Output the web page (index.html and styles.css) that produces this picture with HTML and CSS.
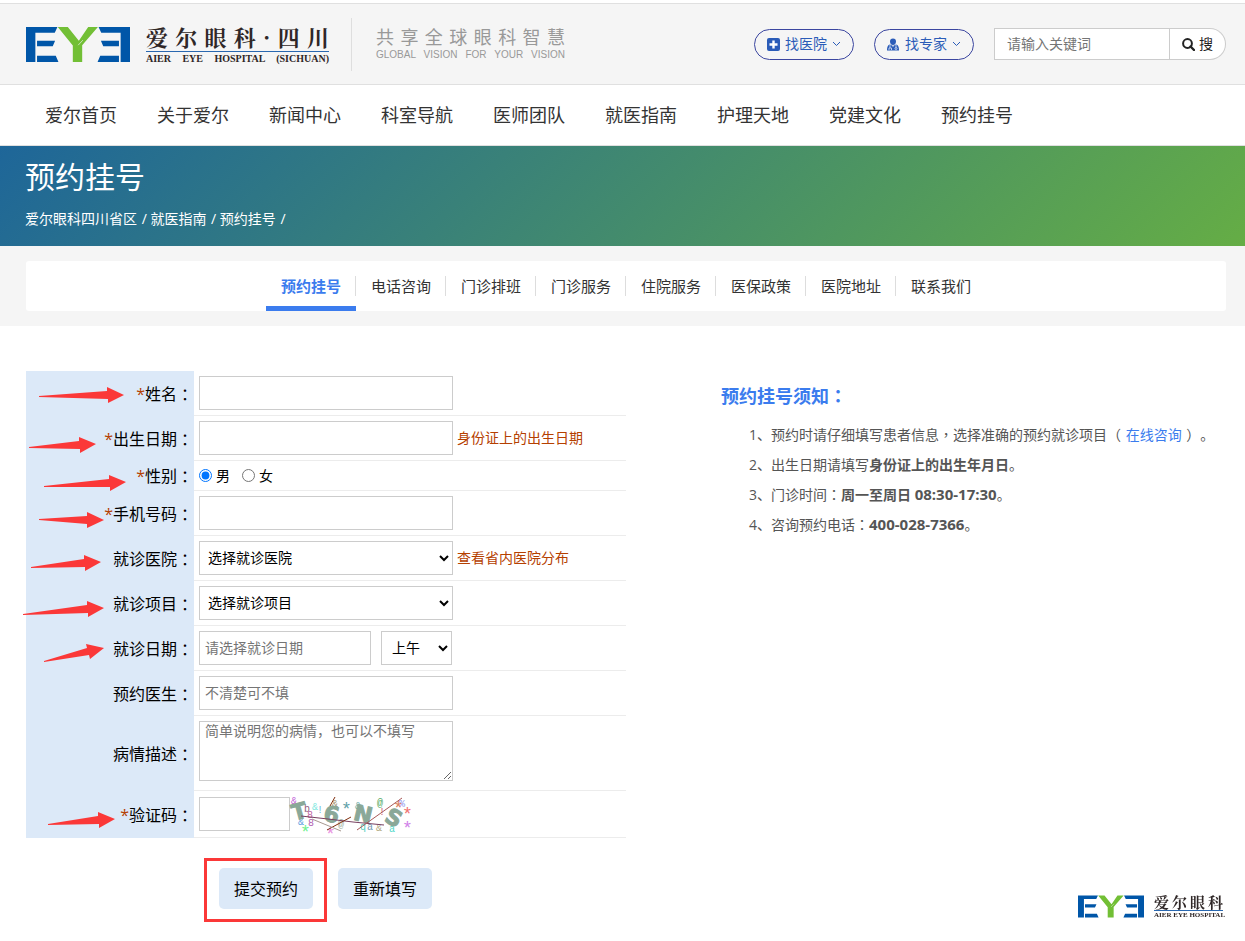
FILE: index.html
```html
<!DOCTYPE html>
<html lang="zh-CN">
<head>
<meta charset="utf-8">
<meta name="viewport" content="width=device-width, initial-scale=1">
<title>预约挂号</title>
<link rel="stylesheet" href="styles.css">
</head>
<body>
<svg width="0" height="0" class="defs" aria-hidden="true">
  <symbol id="eye" viewBox="78 79 311 104">
    <path fill="#0056a8" d="M78 79H172L164 96H106V183H78ZM111 120H165L158 136H111ZM111 165H167L175 183H111ZM389 79H295L303 96H361V183H389ZM356 120H302L309 136H356ZM356 165H300L292 183H356Z"/>
    <path fill="#72bf35" d="M173 79H203L236 120L264 79H293L246 133V183H218V134Z"/>
    <path stroke="#f5f5f5" stroke-width="2" d="M234 133L248 118"/>
  </symbol>
</svg>

<header class="topbar">
  <a class="brand" href="#" aria-label="爱尔眼科四川">
    <svg class="brand-eye"><use href="#eye"/></svg>
    <span class="brand-name"><span class="brand-cn">爱尔眼科·四川</span><span class="brand-en">AIER EYE HOSPITAL (SICHUAN)</span></span>
  </a>
  <div class="slogan"><span class="slogan-cn">共享全球眼科智慧</span><span class="slogan-en">GLOBAL VISION FOR YOUR VISION</span></div>
  <div class="tools">
    <button class="pill" type="button">
      <svg width="13" height="13" viewBox="0 0 13 13"><rect width="13" height="13" rx="2" fill="#2b5cb8"/><path d="M6.500 2.500V10.500M2.500 6.500H10.500" stroke="#fff" stroke-width="2.400"/></svg>
      <span>找医院</span>
      <svg class="chev" width="9" height="6" viewBox="0 0 9 6"><path d="M1 1L4.500 4.500L8 1" fill="none" stroke="#2b5cb8"/></svg>
    </button>
    <button class="pill" type="button">
      <svg width="13" height="13" viewBox="0 0 13 13"><path fill="#2b5cb8" d="M6 .5C8 .5 9 1.800 9 3.500S8 7 6 7S3 5.200 3 3.500S4 .5 6 .5ZM3 6.500L6 8L9 6.500C11 7 12 8.500 12 12.500H0C0 8.500 1 7 3 6.500Z"/><path d="M3 7V10M2 12V10H4.500V12M9 7V9.500M6 8V9" stroke="#dce6f6" stroke-width=".8" fill="none"/><circle cx="9" cy="10.500" r="1" fill="none" stroke="#dce6f6" stroke-width=".8"/></svg>
      <span>找专家</span>
      <svg class="chev" width="9" height="6" viewBox="0 0 9 6"><path d="M1 1L4.500 4.500L8 1" fill="none" stroke="#2b5cb8"/></svg>
    </button>
    <form class="search">
      <input type="text" aria-label="关键词" placeholder="请输入关键词">
      <button type="button"><svg width="13" height="13" viewBox="0 0 13 13"><circle cx="5.500" cy="5.500" r="4.400" fill="none" stroke="#222" stroke-width="2"/><path d="M8.500 8.500L12 12" stroke="#222" stroke-width="2.400" stroke-linecap="round"/></svg><span>搜</span></button>
    </form>
  </div>
</header>

<nav class="mainnav">
  <a href="#">爱尔首页</a><a href="#">关于爱尔</a><a href="#">新闻中心</a><a href="#">科室导航</a><a href="#">医师团队</a><a href="#">就医指南</a><a href="#">护理天地</a><a href="#">党建文化</a><a href="#">预约挂号</a>
</nav>

<section class="banner">
  <h1>预约挂号</h1>
  <p><a href="#">爱尔眼科四川省区</a> / <a href="#">就医指南</a> / <a href="#">预约挂号</a> /</p>
</section>

<div class="subwrap">
  <nav class="subnav">
    <a class="on" href="#">预约挂号</a><a href="#">电话咨询</a><a href="#">门诊排班</a><a href="#">门诊服务</a><a href="#">住院服务</a><a href="#">医保政策</a><a href="#">医院地址</a><a href="#">联系我们</a>
  </nav>
</div>

<main class="content">
  <form class="booking">
    <div class="row"><label class="name" for="f1"><i>*</i>姓名<span class="mid" lang="zh-TW">：</span></label><div class="cell"><input class="box" id="f1" type="text"></div></div>
    <div class="row"><label class="name" for="f2"><i>*</i>出生日期<span class="mid" lang="zh-TW">：</span></label><div class="cell"><input class="box" id="f2" type="text"><span class="hint">身份证上的出生日期</span></div></div>
    <div class="row slim"><span class="name"><i>*</i>性别<span class="mid" lang="zh-TW">：</span></span><div class="cell"><label class="opt"><input type="radio" name="sex" checked>男</label><label class="opt"><input type="radio" name="sex">女</label></div></div>
    <div class="row"><label class="name" for="f4"><i>*</i>手机号码<span class="mid" lang="zh-TW">：</span></label><div class="cell"><input class="box" id="f4" type="text"></div></div>
    <div class="row"><label class="name" for="f5">就诊医院<span class="mid" lang="zh-TW">：</span></label><div class="cell"><select class="box" id="f5"><option>选择就诊医院</option></select><a class="hint" href="#">查看省内医院分布</a></div></div>
    <div class="row"><label class="name" for="f6">就诊项目<span class="mid" lang="zh-TW">：</span></label><div class="cell"><select class="box" id="f6"><option>选择就诊项目</option></select></div></div>
    <div class="row"><label class="name" for="f7">就诊日期<span class="mid" lang="zh-TW">：</span></label><div class="cell"><input class="box date" id="f7" type="text" placeholder="请选择就诊日期"><select class="box half" aria-label="时段"><option>上午</option></select></div></div>
    <div class="row"><label class="name" for="f8">预约医生<span class="mid" lang="zh-TW">：</span></label><div class="cell"><input class="box" id="f8" type="text" placeholder="不清楚可不填"></div></div>
    <div class="row tall"><label class="name" for="f9">病情描述<span class="mid" lang="zh-TW">：</span></label><div class="cell"><textarea class="box" id="f9" placeholder="简单说明您的病情，也可以不填写"></textarea></div></div>
    <div class="row code"><label class="name" for="f10"><i>*</i>验证码<span class="mid" lang="zh-TW">：</span></label><div class="cell"><input class="box short" id="f10" type="text">
      <svg class="captcha" viewBox="0 0 121 36" role="img" aria-label="验证码图片">
        <g class="noise">
          <text x="1" y="8" fill="#c060d8">&amp;</text><text x="14" y="16" fill="#906080">b</text><text x="22" y="14" fill="#80e8e0">&amp;</text><text x="27" y="17" fill="#70b8e0">!</text><text x="8" y="29" fill="#60a0e0">&amp;</text><text x="17" y="22" fill="#c060a0">8</text><text x="18" y="30" fill="#b060b0">8</text><text x="42" y="11" fill="#a09070">&amp;</text><text x="48" y="31" fill="#a0b0a0">@</text><text x="65" y="13" fill="#70b0b0">&amp;</text><text x="87" y="10" fill="#50a860">@</text><text x="89" y="19" fill="#d06878">!</text><text x="109" y="11" fill="#9098f0">%</text><text x="70" y="34" fill="#50d0c0">q</text><text x="77" y="34" fill="#7098b0">a</text><text x="86" y="35" fill="#b0a880">&amp;</text><text x="99" y="36" fill="#50d8c8">a</text>
        </g>
        <g class="stars"><text x="51" y="19" fill="#60a0a8">*</text><text x="10" y="42" fill="#70f090">*</text><text x="112" y="24" fill="#f07070">*</text><text x="103" y="18" fill="#d88060">*</text><text x="112" y="38" fill="#d080e8">*</text><text x="35" y="44" fill="#e890e0">*</text></g>
        <g class="chars"><text transform="rotate(-15 10 16)" x="2" y="23">T</text><text transform="rotate(12 42 18)" x="34" y="26">6</text><text transform="rotate(13 74 18)" x="64" y="26">N</text><text transform="rotate(28 105 22)" x="96" y="30">S</text></g>
        <g fill="none"><path stroke="#784060" d="M11 20L38 23L63 26L94 29"/><path stroke="#803010" d="M37 34L61 21M40 10L45 1"/><path stroke="#a89890" d="M22 23L51 35"/><path stroke="#a85858" d="M67 34L112 2"/></g>
      </svg></div></div>
    <div class="actions"><span class="marked"><button type="submit">提交预约</button></span><button class="again" type="reset">重新填写</button></div>
    <svg class="arrows" viewBox="26 371 168 467" aria-hidden="true"><g fill="#fb3838">
      <path d="M39 396L107 391V387L124 395L108 403V399L39 397Z"/>
      <path d="M29 447L79 441V437L96 444L80 453V449L29 448Z"/>
      <path d="M44 486L109 479V475L126 482L110 491V487L44 487Z"/>
      <path d="M39 519L87 516V512L104 520L87 528V524L39 520Z"/>
      <path d="M31 567L84 559V555L101 562L85 571V567L31 568Z"/>
      <path d="M23 614L87 605V601L104 608L88 617V613L23 615Z"/>
      <path d="M44 661L87 648L86 644L104 648L90 659L89 655L44 662Z"/>
      <path d="M48 824L98 816V812L115 819L99 828V824L48 825Z"/>
    </g></svg>
  </form>

  <section class="notice">
    <h2>预约挂号须知<span class="mid" lang="zh-TW">：</span></h2>
    <p>1、预约时请仔细填写患者信息<span class="mid" lang="zh-TW">，</span>选择准确的预约就诊项目（ <a href="#">在线咨询</a> ）。</p>
    <p>2、出生日期请填写<b>身份证上的出生年月日</b>。</p>
    <p>3、门诊时间<span class="mid" lang="zh-TW">：</span><b>周一至周日 <span class="num">08:30-17:30</span></b>。</p>
    <p>4、咨询预约电话<span class="mid" lang="zh-TW">：</span><b class="num">400-028-7366</b>。</p>
  </section>
</main>

<div class="floatlogo">
  <svg><use href="#eye"/></svg>
  <span class="brand-name"><span class="brand-cn">爱尔眼科</span><span class="brand-en">AIER EYE HOSPITAL</span></span>
</div>
</body>
</html>
```

FILE: styles.css
```css
* { box-sizing: border-box; }
body {
  margin: 0;
  padding-top: 3px;
  background: #fff;
  color: #333;
  font: 14px/20px "Open Sans", "Noto Sans CJK SC", sans-serif;
  text-spacing-trim: space-all;
}
a { color: inherit; text-decoration: none; }
button, input, select, textarea { font: inherit; }
button { cursor: pointer; }
.defs { position: absolute; }
.mid { font-family: "Noto Sans CJK TC", sans-serif; line-height: 20px; }

/* header */
.topbar {
  display: flex;
  align-items: center;
  min-height: 82px;
  padding: 0 19px 0 26px;
  background: #f5f5f5;
  border-top: 1px solid #e0e0e0;
  border-bottom: 1px solid #e0e0e0;
}
.brand { display: flex; align-items: center; gap: 16px; }
.brand-eye { width: 104px; height: 35px; }
.brand-name { display: flex; flex-direction: column; width: 183px; color: #2f2727; text-align-last: justify; }
.brand-cn {
  padding-bottom: 2px;
  border-bottom: 1px solid #2a68b0;
  font: 700 22px/24px "Noto Serif CJK SC", "Noto Sans CJK SC", serif;
}
.brand-en { padding-top: 2px; font: bold 10px/10px "Liberation Serif", serif; white-space: nowrap; }
.slogan {
  display: flex;
  flex-direction: column;
  justify-content: center;
  width: 214px;
  height: 53px;
  margin-left: 22px;
  padding-left: 24px;
  border-left: 1px solid #dedede;
  color: #999;
  text-align-last: justify;
}
.slogan-cn { font-size: 18px; line-height: 22px; }
.slogan-en { font: 10px/14px "Liberation Sans", sans-serif; white-space: nowrap; }
.tools { display: flex; align-items: center; gap: 20px; margin-left: auto; }
.pill {
  display: flex;
  align-items: center;
  gap: 5px;
  height: 31px;
  padding: 0 12px;
  border: 1px solid #3b46a0;
  border-radius: 16px;
  background: none;
  color: #2b5cb8;
}
.search { display: flex; height: 32px; margin: 0; }
.search input {
  width: 176px;
  padding: 0 12px;
  border: 1px solid #ccc;
  border-radius: 0;
  background: #fff;
}
.search button {
  display: flex;
  align-items: center;
  gap: 4px;
  width: 56px;
  padding: 0 0 0 12px;
  border: 1px solid #ccc;
  border-left: 0;
  border-radius: 0 16px 16px 0;
  background: #fff;
  color: #222;
}
::placeholder { color: #757575; opacity: 1; }

/* main navigation */
.mainnav { display: flex; padding: 0 25px; border-bottom: 1px solid #e0e0e0; }
.mainnav a { padding: 0 20px; font-size: 18px; line-height: 60px; white-space: nowrap; }

/* banner */
.banner {
  min-height: 100px;
  padding: 11px 25px;
  background: linear-gradient(135deg, #1e6699, #65ad45);
  color: #fff;
}
.banner h1 { margin: 0; font-size: 30px; line-height: 40px; font-weight: 400; }
.banner p { margin: 12px 0 0; }
.banner p a { margin-right: 1px; }

/* section navigation */
.subwrap { padding: 15px 19px 15px 26px; background: #f5f5f5; }
.subnav { display: flex; justify-content: center; height: 50px; border-radius: 3px; background: #fff; }
.subnav a {
  display: flex;
  align-items: center;
  justify-content: center;
  width: 90px;
  border-bottom: 5px solid transparent;
  padding-top: 5px;
  font-size: 15px;
  background: linear-gradient(#ddd, #ddd) right 15px / 1px 20px no-repeat;
}
.subnav a:last-child { background: none; }
.subnav .on { border-bottom-color: #3b7cee; color: #3b7cee; font-weight: 700; }

/* booking form */
.content { display: flex; align-items: flex-start; gap: 95px; padding: 45px 19px 20px 26px; }
.booking { position: relative; flex: 0 1 600px; color: #000; }
.row { display: flex; min-height: 45px; }
.row.slim { min-height: 30px; }
.row.tall { min-height: 75px; }
.name {
  display: flex;
  flex: none;
  align-items: center;
  justify-content: flex-end;
  width: 168px;
  padding-right: 1px;
  background: #dce9f8;
  font-size: 16px;
}
.name i { color: #b54000; font-style: normal; }
.cell {
  display: flex;
  flex: 1;
  align-items: center;
  padding: 5px;
  border-bottom: 1px solid #ececec;
}
.tall .cell { align-items: flex-start; }
.box {
  width: 254px;
  height: 34px;
  padding: 0 5px 2px;
  border: 1px solid #ccc;
  border-radius: 0;
  background: #fff;
  color: #000;
}
select.box { padding: 0 0 2px 4px; }
textarea.box { height: 60px; padding: 0 5px; line-height: 18px; }
.box.date { width: 172px; }
.box.half { width: 71px; margin-left: 10px; padding-left: 6px; }
.box.short { width: 91px; }
.hint { margin-left: 4px; color: #b54000; }
.slim .cell { padding: 0 5px; }
.opt { display: flex; align-items: center; gap: 4px; margin-right: 12px; }
.opt input { width: 13px; height: 13px; margin: 0; }
.captcha { width: 121px; height: 36px; overflow: visible; }
.noise { font: 10px "Liberation Mono", monospace; }
.stars { font: 18px "Liberation Mono", monospace; }
.chars { font: bold 22px "DejaVu Sans", sans-serif; fill: #8aa898; stroke: #8aa898; }
.actions { display: flex; gap: 11px; padding: 20px 0 0 178px; align-items: flex-start; }
.marked { padding: 7px 11px 10px 12px; border: 3px solid #fb3838; }
.actions button {
  display: block;
  width: 94px;
  height: 41px;
  padding: 0;
  border: 0;
  border-radius: 5px;
  background: #dce9f8;
  color: #000;
  font-size: 16px;
}
.actions .again { margin-top: 10px; }
.arrows {
  position: absolute;
  top: 0;
  left: 0;
  width: 168px;
  height: 467px;
  overflow: visible;
  pointer-events: none;
}

/* notice */
.notice { flex: 1; padding-top: 10px; color: #555; }
.notice h2 { margin: 0 0 9px; color: #3b7cee; font-size: 18px; line-height: 30px; }
.notice p { margin: 0 0 0 28px; line-height: 30px; }
.notice a { margin: 0 1px; color: #3b7cee; }
.num { font-size: 15px; line-height: 20px; }

/* floating logo */
.floatlogo { position: fixed; right: 22px; bottom: 22px; display: flex; align-items: center; gap: 10px; }
.floatlogo svg { width: 66px; height: 23px; }
.floatlogo .brand-name { width: 69px; }
.floatlogo .brand-cn { font-size: 15px; line-height: 16px; padding-bottom: 0; }
.floatlogo .brand-en { font-size: 7px; line-height: 7px; padding-top: 1px; }
```
